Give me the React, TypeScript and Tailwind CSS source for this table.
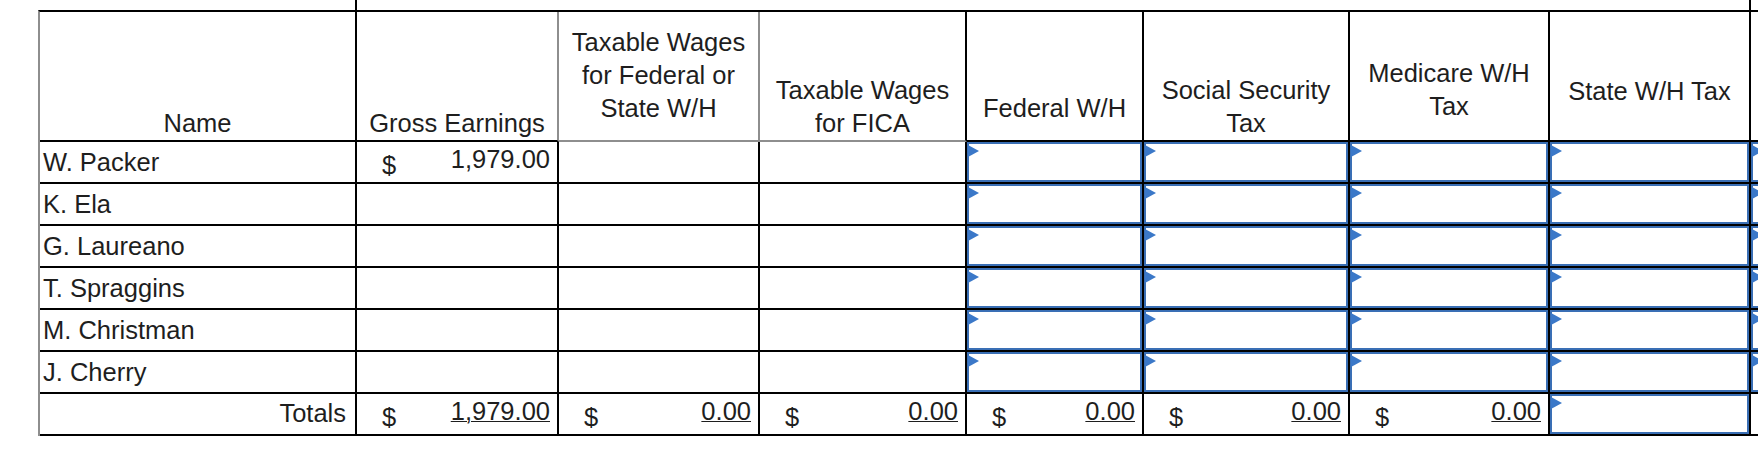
import React from 'react';
import clsx from 'clsx';

const COLS = 'grid grid-cols-[317px_202px_201px_207px_177px_206px_200px_201px_200px]';

const names = ['W. Packer', 'K. Ela', 'G. Laureano', 'T. Spraggins', 'M. Christman', 'J. Cherry'];

// Header cells: label lines, bottom padding (to mimic the sheet's odd alignment), border colours
const headers: { lines: string[]; pb: string; bottom: string; right: string }[] = [
  { lines: ['Name'], pb: 'pb-0', bottom: 'border-b-black', right: 'border-r-black' },
  { lines: ['Gross Earnings'], pb: 'pb-0', bottom: 'border-b-black', right: 'border-r-[#8e8e8e]' },
  { lines: ['Taxable Wages', 'for Federal or', 'State W/H'], pb: 'pb-[15px]', bottom: 'border-b-[#8e8e8e]', right: 'border-r-[#8e8e8e]' },
  { lines: ['Taxable Wages', 'for FICA'], pb: 'pb-0', bottom: 'border-b-[#8e8e8e]', right: 'border-r-black' },
  { lines: ['Federal W/H'], pb: 'pb-[15px]', bottom: 'border-b-black', right: 'border-r-black' },
  { lines: ['Social Security', 'Tax'], pb: 'pb-0', bottom: 'border-b-black', right: 'border-r-black' },
  { lines: ['Medicare W/H', 'Tax'], pb: 'pb-[17px]', bottom: 'border-b-black', right: 'border-r-black' },
  { lines: ['State W/H Tax'], pb: 'pb-[32px]', bottom: 'border-b-black', right: 'border-r-black' },
];

function InputBox() {
  return (
    <div className="relative h-full w-full border-2 border-[#3a6fb5] bg-white">
      <span className="absolute left-[-1px] top-[1px] h-0 w-0 border-y-[6px] border-l-[11px] border-y-transparent border-l-[#3b78c8]" />
    </div>
  );
}

function Money({ value, total }: { value: string; total?: boolean }) {
  return (
    <div className="flex h-full items-center justify-between pl-[25px] pr-[7px]">
      <span className="mt-[6px]">$</span>
      <span className={clsx('mb-[6px]', total && 'underline decoration-1')}>{value}</span>
    </div>
  );
}

const cell = 'h-[42px] border-b-2 border-r-2 border-black';

export default function App() {
  return (
    <div className="h-[476px] w-[1758px] overflow-hidden bg-white font-['Liberation_Sans',Arial,sans-serif] text-[25.5px] text-[#1e1e1e]">
      <div className="ml-[38px]">
        {/* tail of the row above */}
        <div className={clsx(COLS, 'h-[10px] pl-[2px]')}>
          <div className="border-r-2 border-black" />
          <div className="col-span-7 border-r-2 border-black" />
          <div />
        </div>

        <div className={clsx(COLS, 'border-l-2 border-t-2 border-l-[#8e8e8e] border-t-black')}>
          {headers.map((h, i) => (
            <div
              key={i}
              className={clsx(
                'flex h-[130px] flex-col justify-end border-b-2 border-r-2 text-center leading-[33px]',
                h.pb,
                h.bottom,
                h.right
              )}
            >
              {h.lines.map((l) => (
                <div key={l}>{l}</div>
              ))}
            </div>
          ))}
          <div className="h-[130px] border-b-2 border-black" />

          {names.map((n, r) => (
            <React.Fragment key={n}>
              <div className={clsx(cell, 'flex items-center pl-[3px]')}>{n}</div>
              <div className={cell}>{r === 0 && <Money value="1,979.00" />}</div>
              <div className={cell} />
              <div className={cell} />
              {[0, 1, 2, 3].map((k) => (
                <div key={k} className={cell}>
                  <InputBox />
                </div>
              ))}
              <div className="h-[42px] border-b-2 border-black">
                <InputBox />
              </div>
            </React.Fragment>
          ))}

          {/* Totals */}
          <div className={clsx(cell, 'flex items-center justify-end pr-[9px]')}>
            <span className="mb-[2px]">Totals</span>
          </div>
          <div className={cell}>
            <Money value="1,979.00" total />
          </div>
          <div className={cell}>
            <Money value="0.00" total />
          </div>
          <div className={cell}>
            <Money value="0.00" total />
          </div>
          <div className={cell}>
            <Money value="0.00" total />
          </div>
          <div className={cell}>
            <Money value="0.00" total />
          </div>
          <div className={cell}>
            <Money value="0.00" total />
          </div>
          <div className={cell}>
            <InputBox />
          </div>
          <div className="h-[42px] border-b-2 border-black" />
        </div>
      </div>
    </div>
  );
}
